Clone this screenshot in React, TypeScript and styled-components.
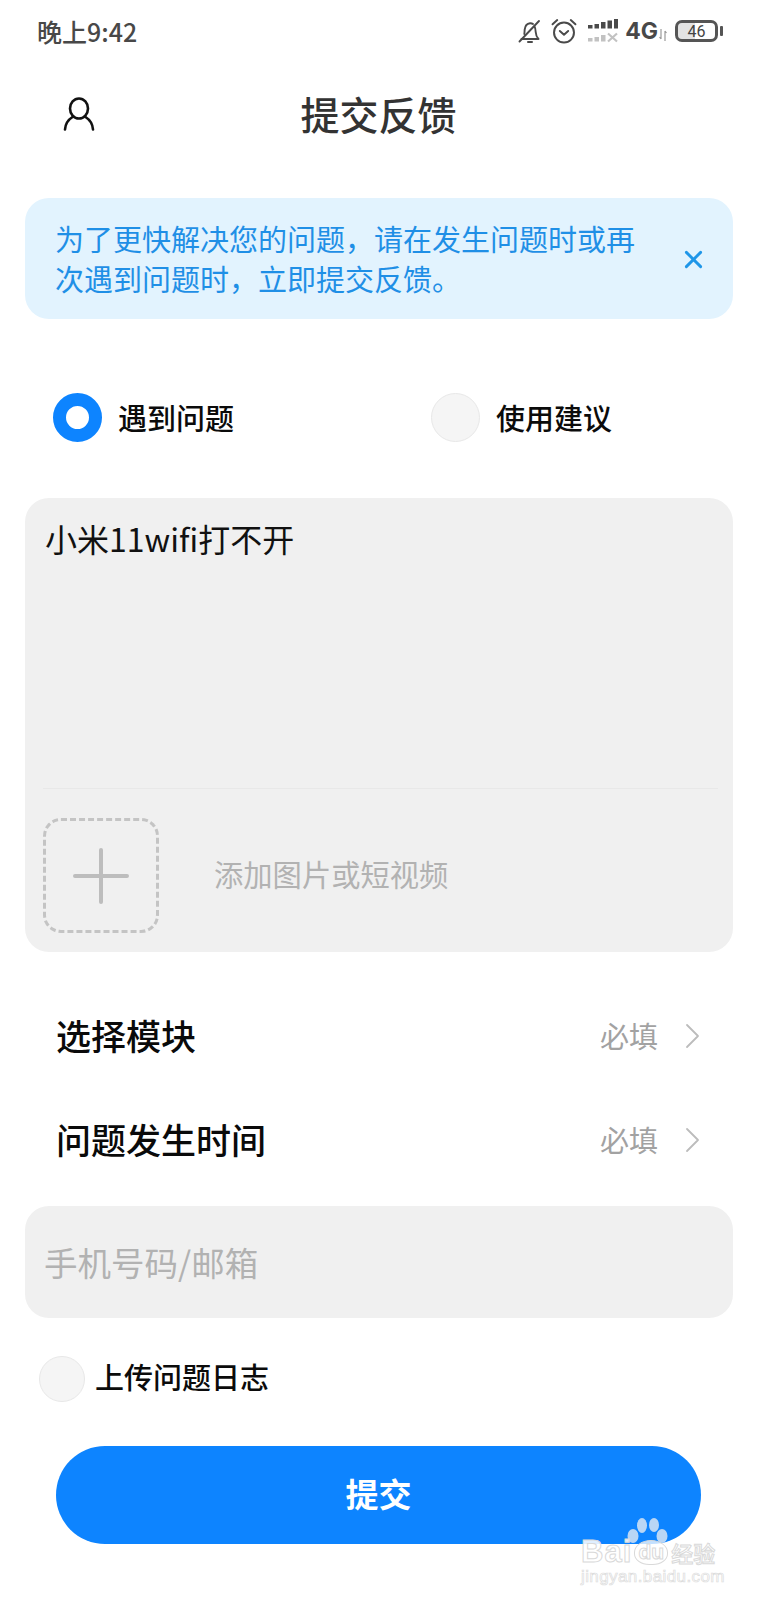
import React from "react";
import styled, { createGlobalStyle } from "styled-components";

const FONT = `"Noto Sans CJK SC", "Noto Sans", "Liberation Sans", sans-serif`;

const Global = createGlobalStyle`
  html, body { margin: 0; padding: 0; background: #fff; }
  body { font-family: ${FONT}; }
  * { box-sizing: border-box; }
`;

const Page = styled.div`
  position: relative;
  width: 757px;
  height: 1600px;
  overflow: hidden;
  background: #fff;
  display: flex;
  flex-direction: column;
`;

const StatusBar = styled.div`
  height: 62px;
  padding: 0 34px 0 37px;
  display: flex;
  align-items: center;
  justify-content: space-between;
`;

const Clock = styled.span`
  font-size: 25px;
  line-height: 30px;
  font-weight: 500;
  color: #484848;
`;

const StatusIcons = styled.div`
  display: flex;
  align-items: center;
`;

const BellIcon = styled.svg`
  width: 24px;
  height: 25px;
`;

const AlarmIcon = styled.svg`
  width: 26px;
  height: 26px;
  margin-left: 9px;
`;

const SignalIcon = styled.svg`
  width: 30px;
  height: 24px;
  margin-left: 11px;
`;

const ArrowsIcon = styled.svg`
  width: 8px;
  height: 12px;
  margin-top: 8px;
`;

const NetLabel = styled.span`
  font-family: "Inter", "Liberation Sans", sans-serif;
  font-size: 23px;
  font-weight: 700;
  color: #484848;
  margin: 0 1px 0 7px;
`;

const Battery = styled.div`
  position: relative;
  width: 43px;
  height: 22px;
  margin-left: 8px;
  margin-right: 5px;
  border: 3px solid #555;
  border-radius: 7px;
  display: flex;
  align-items: center;
  justify-content: center;
  font-family: "Roboto", sans-serif;
  font-size: 16px;
  color: #444;
  background: linear-gradient(90deg, #e3e3e3 46%, #fff 46%);
  background-clip: padding-box;
  &::after {
    content: "";
    position: absolute;
    right: -8px;
    top: 3px;
    width: 3px;
    height: 10px;
    border-radius: 1px;
    background: #555;
  }
`;

const Header = styled.div`
  height: 104px;
  padding: 0 0 0 63px;
  position: relative;
  display: flex;
  align-items: center;
`;

const Title = styled.h1`
  position: absolute;
  left: 0;
  right: 0;
  margin: 0;
  padding-bottom: 2px;
  text-align: center;
  font-size: 39px;
  line-height: 50px;
  font-weight: 500;
  color: #333;
`;

const Content = styled.div`
  padding: 32px 24px 0 25px;
  display: flex;
  flex-direction: column;
`;

const Banner = styled.div`
  height: 121px;
  border-radius: 24px;
  background: #e2f3fe;
  padding: 20px 30px 0 30px;
  display: flex;
  justify-content: space-between;
  align-items: flex-start;
`;

const BannerText = styled.p`
  margin: 0;
  width: 590px;
  font-size: 29px;
  line-height: 40px;
  color: #1f8fe6;
`;

const BannerClose = styled.svg`
  width: 19px;
  height: 19px;
  margin-top: 32px;
  flex: none;
`;

const TypeRow = styled.div`
  margin-top: 74px;
  padding-left: 28px;
  display: flex;
  align-items: center;
  height: 49px;
`;

const TypeOption = styled.div<{ $w: number }>`
  width: ${(p) => p.$w}px;
  display: flex;
  align-items: center;
  gap: 16px;
`;

const Radio = styled.span<{ $on?: boolean; $size?: number }>`
  display: block;
  flex: none;
  width: ${(p) => p.$size ?? 49}px;
  height: ${(p) => p.$size ?? 49}px;
  border-radius: 50%;
  ${(p) =>
    p.$on
      ? `background: #fff; border: 13px solid #0d84ff;`
      : `background: #f5f5f5; border: 1px solid #e8e8e8;`}
`;

const OptionLabel = styled.span<{ $lift?: number }>`
  font-size: 29px;
  line-height: 40px;
  padding-bottom: ${(p) => p.$lift ?? 2}px;
  font-weight: 500;
  color: #0b0b0b;
`;

const Editor = styled.div`
  margin-top: 56px;
  height: 454px;
  border-radius: 24px;
  background: #f0f0f0;
  padding: 0 15px 0 18px;
  display: flex;
  flex-direction: column;
`;

const EditorText = styled.div`
  height: 291px;
  padding: 17px 0 0 2px;
  font-size: 32px;
  line-height: 46px;
  color: #111;
  border-bottom: 1px solid #e8e8e8;
`;

const AttachRow = styled.div`
  margin-top: 29px;
  display: flex;
  align-items: center;
  gap: 55px;
`;

const AddBox = styled.div`
  width: 116px;
  height: 115px;
  flex: none;
  border: 3px dashed #c4c4c4;
  border-radius: 18px;
  display: flex;
  align-items: center;
  justify-content: center;
`;

const Muted = styled.span<{ $size?: number; $lift?: number }>`
  font-size: ${(p) => p.$size ?? 29.3}px;
  line-height: 40px;
  padding-bottom: ${(p) => p.$lift ?? 0}px;
  color: #b2b2b2;
`;

const FieldRow = styled.div`
  height: 104px;
  padding: 0 33px 0 31px;
  display: flex;
  align-items: center;
  justify-content: space-between;
`;

const FieldList = styled.div`
  margin-top: 32px;
  display: flex;
  flex-direction: column;
`;

const FieldName = styled.span`
  font-size: 35px;
  line-height: 46px;
  padding-bottom: 2px;
  font-weight: 500;
  color: #0a0a0a;
`;

const FieldRight = styled.div`
  display: flex;
  align-items: center;
  gap: 27px;
`;

const Required = styled.span`
  font-size: 29px;
  line-height: 40px;
  padding-bottom: 2px;
  color: #a2a2a2;
`;

const Input = styled.div`
  margin-top: 14px;
  height: 112px;
  border-radius: 24px;
  background: #f0f0f0;
  padding-left: 19px;
  display: flex;
  align-items: center;
`;

const LogRow = styled.div`
  margin-top: 38px;
  padding-left: 14px;
  display: flex;
  align-items: center;
  gap: 10px;
`;

const SubmitWrap = styled.div`
  margin-top: 44px;
  padding: 0 32px 0 31px;
`;

const Submit = styled.button`
  display: block;
  width: 100%;
  height: 98px;
  padding: 0 0 4px;
  border: 0;
  border-radius: 49px;
  background: #0d84ff;
  color: #fff;
  font-family: ${FONT};
  font-size: 33px;
  font-weight: 700;
`;

const Watermark = styled.div`
  position: absolute;
  left: 581px;
  top: 1518px;
  width: 140px;
  height: 70px;
`;

const WatermarkPaw = styled.svg`
  position: absolute;
  left: 46px;
  top: 0;
  width: 41px;
  height: 30px;
`;

const WatermarkBrand = styled.div`
  position: absolute;
  left: 0;
  top: 16px;
  display: flex;
  align-items: center;
  font-family: "Liberation Sans", sans-serif;
  font-size: 31px;
  line-height: 36px;
  font-weight: 700;
  letter-spacing: 1px;
  color: rgba(255, 255, 255, 0.9);
  -webkit-text-stroke: 1px #d9d9d9;
  white-space: nowrap;
`;

const WatermarkPad = styled.span`
  margin-left: 2px;
  width: 34px;
  height: 25px;
  border: 1.5px solid #d9d9d9;
  border-radius: 50% 50% 45% 45%;
  background: rgba(255, 255, 255, 0.75);
  display: flex;
  align-items: center;
  justify-content: center;
  font-size: 21px;
  letter-spacing: 0;
`;

const WatermarkCn = styled.span`
  font-family: ${FONT};
  font-size: 22px;
  font-weight: 500;
  letter-spacing: 0;
  margin-left: 3px;
`;

const WatermarkUrl = styled.div`
  position: absolute;
  left: 0;
  top: 50px;
  font-family: "Liberation Sans", sans-serif;
  font-size: 17px;
  line-height: 18px;
  letter-spacing: 0.4px;
  color: rgba(255, 255, 255, 0.9);
  -webkit-text-stroke: 0.7px #dcdcdc;
  white-space: nowrap;
`;

const Chevron = () => (
  <svg width="15" height="26" viewBox="0 0 15 26" fill="none">
    <path d="M2 2l11 11L2 24" stroke="#bcbcbc" strokeWidth="1.8" strokeLinecap="round" strokeLinejoin="round" />
  </svg>
);

export default function App() {
  return (
    <Page>
      <Global />
      <StatusBar>
        <Clock>晚上9:42</Clock>
        <StatusIcons>
          <BellIcon viewBox="0 0 24 24" fill="none" stroke="#4a4a4a" strokeWidth="1.9" strokeLinecap="round" strokeLinejoin="round">
            <path d="M3.500 19.500h17c-2-2-2.600-3.800-2.800-7-.1-2-.3-4-1.200-5.600M6.300 14.500c.3-1.500.2-3 .4-4.500.4-3.400 2.400-6 5.300-6.300 1.200-.1 2.200.2 3 .8" />
            <path d="M1.500 22 21 1.500" />
            <path d="M10 22.500h4" strokeWidth="2" />
          </BellIcon>
          <AlarmIcon viewBox="0 0 25 25" fill="none" stroke="#4a4a4a" strokeWidth="1.9" strokeLinecap="round" strokeLinejoin="round">
            <circle cx="12.500" cy="14" r="9.600" />
            <path d="M8.500 12.500l4 3.500 4-3.500" />
            <path d="M1.500 6 6 2M23.500 6 19 2" />
          </AlarmIcon>
          <SignalIcon viewBox="0 0 30 24" fill="#4a4a4a">
            <rect x="0" y="6" width="4.500" height="3.500" />
            <rect x="6.500" y="5" width="4.500" height="4.500" />
            <rect x="13" y="3" width="4.500" height="6.500" />
            <rect x="19.500" y="1.500" width="4.500" height="8" />
            <rect x="26" y="0" width="4" height="9.500" />
            <g fill="#c2c2c2">
              <rect x="0" y="19" width="4.500" height="3.500" />
              <rect x="6.500" y="18" width="4.500" height="4.500" />
              <rect x="13" y="16" width="4.500" height="6.500" />
            </g>
            <path d="M20 14.500l9 8M29 14.500l-9 8" stroke="#c2c2c2" strokeWidth="2.200" fill="none" />
          </SignalIcon>
          <NetLabel>4G</NetLabel>
          <ArrowsIcon viewBox="0 0 8 12" fill="none" stroke="#9a9a9a" strokeWidth="1.2">
            <path d="M2 0v10M0.500 8 2 10M6 12V2M6 2 7.500 4" />
          </ArrowsIcon>
          <Battery>46</Battery>
        </StatusIcons>
      </StatusBar>

      <Header>
        <svg width="32" height="34" viewBox="0 0 32 34" fill="none" stroke="#111" strokeWidth="2.600" strokeLinecap="round">
          <ellipse cx="16" cy="11.500" rx="9" ry="10" />
          <path d="M2 32.500c.5-7 3.500-10 7.500-12.500M30 32.500c-.5-7-3.500-10-7.500-12.500" />
        </svg>
        <Title>提交反馈</Title>
      </Header>

      <Content>
        <Banner>
          <BannerText>为了更快解决您的问题，请在发生问题时或再次遇到问题时，立即提交反馈。</BannerText>
          <BannerClose viewBox="0 0 20 20" fill="none" stroke="#1f96e8" strokeWidth="3" strokeLinecap="round">
            <path d="M2.500 2.500l15 15M17.500 2.500l-15 15" />
          </BannerClose>
        </Banner>

        <TypeRow>
          <TypeOption $w={378}>
            <Radio $on />
            <OptionLabel>遇到问题</OptionLabel>
          </TypeOption>
          <TypeOption $w={200}>
            <Radio />
            <OptionLabel>使用建议</OptionLabel>
          </TypeOption>
        </TypeRow>

        <Editor>
          <EditorText>小米11wifi打不开</EditorText>
          <AttachRow>
            <AddBox>
              <svg width="56" height="56" viewBox="0 0 56 56" stroke="#bdbdbd" strokeWidth="4" strokeLinecap="round">
                <path d="M2 28h52M28 2v52" />
              </svg>
            </AddBox>
            <Muted $lift={5}>添加图片或短视频</Muted>
          </AttachRow>
        </Editor>

        <FieldList>
          <FieldRow>
            <FieldName>选择模块</FieldName>
            <FieldRight>
              <Required>必填</Required>
              <Chevron />
            </FieldRight>
          </FieldRow>
          <FieldRow>
            <FieldName>问题发生时间</FieldName>
            <FieldRight>
              <Required>必填</Required>
              <Chevron />
            </FieldRight>
          </FieldRow>
        </FieldList>

        <Input>
          <Muted $size={33.500}>手机号码/邮箱</Muted>
        </Input>

        <LogRow>
          <Radio $size={46} />
          <OptionLabel $lift={6}>上传问题日志</OptionLabel>
        </LogRow>

        <SubmitWrap>
          <Submit>提交</Submit>
        </SubmitWrap>
      </Content>

      <Watermark>
        <WatermarkPaw viewBox="0 0 41 30" fill="#b9d6f5">
          <ellipse cx="6" cy="18" rx="5.500" ry="7" />
          <ellipse cx="15" cy="7.500" rx="5" ry="7.500" />
          <ellipse cx="27" cy="7" rx="5" ry="7" />
          <ellipse cx="35" cy="18" rx="5.500" ry="7" />
        </WatermarkPaw>
        <WatermarkBrand>
          Bai<WatermarkPad>du</WatermarkPad>
          <WatermarkCn>经验</WatermarkCn>
        </WatermarkBrand>
        <WatermarkUrl>jingyan.baidu.com</WatermarkUrl>
      </Watermark>
    </Page>
  );
}
